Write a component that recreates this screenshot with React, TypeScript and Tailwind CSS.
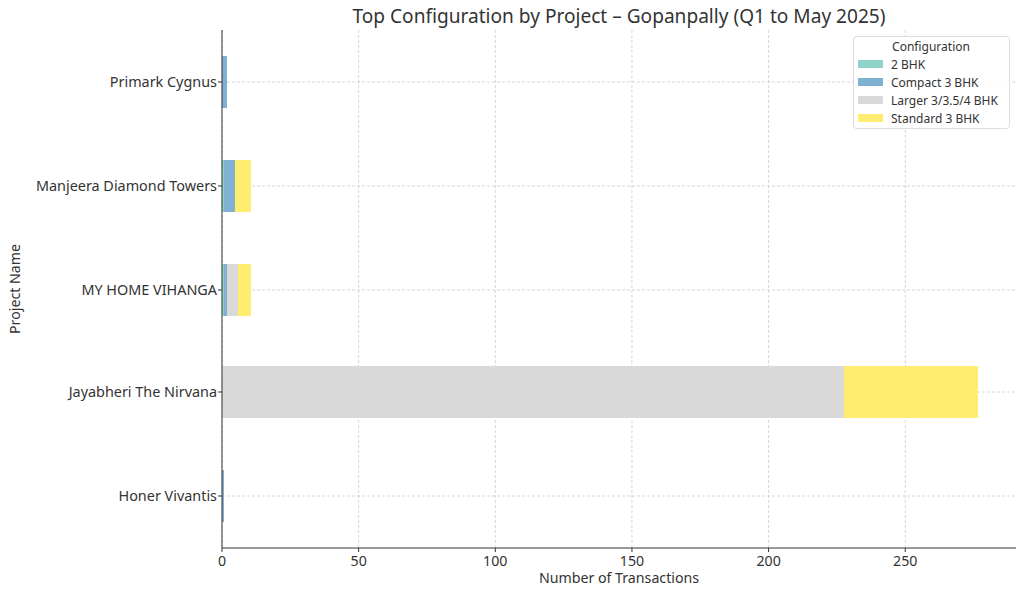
export default function App() {
  const x0 = 222, k = 2.733;
  const X = (v: number) => x0 + v * k;
  const ticks = [0, 50, 100, 150, 200, 250];
  const rows = [
    { name: "Primark Cygnus", y: 82, segs: [["#80b1d3", 222, 227]] },
    { name: "Manjeera Diamond Towers", y: 186, segs: [["#8dd3c7", 222, 224], ["#80b1d3", 224, 235], ["#ffed6f", 235, 251]] },
    { name: "MY HOME VIHANGA", y: 290, segs: [["#8dd3c7", 222, 224], ["#80b1d3", 224, 227], ["#d9d9d9", 227, 238], ["#ffed6f", 238, 251]] },
    { name: "Jayabheri The Nirvana", y: 392, segs: [["#d9d9d9", 222, 844], ["#ffed6f", 844, 978]] },
    { name: "Honer Vivantis", y: 496, segs: [["#80b1d3", 222, 224]] },
  ] as { name: string; y: number; segs: [string, number, number][] }[];
  const legend: [string, string][] = [["#8dd3c7", "2 BHK"], ["#80b1d3", "Compact 3 BHK"], ["#d9d9d9", "Larger 3/3.5/4 BHK"], ["#ffed6f", "Standard 3 BHK"]];
  return (
    <div className="w-[1024px] h-[594px] bg-white font-['DejaVu_Sans',sans-serif]">
      <svg width="1024" height="594">
        <text x="619" y="23" textAnchor="middle" fontSize="19.1" fill="#333">Top Configuration by Project – Gopanpally (Q1 to May 2025)</text>
        {ticks.map((t) => (
          <g key={t}>
            <line x1={X(t)} x2={X(t)} y1="30" y2="548" stroke="#ccc" strokeDasharray="3 2" strokeWidth="0.8" />
            <line x1={X(t)} x2={X(t)} y1="548" y2="552" stroke="#333" />
            <text x={X(t)} y="566" textAnchor="middle" fontSize="14.2" fill="#333">{t}</text>
          </g>
        ))}
        {rows.map((r) => (
          <g key={r.name}>
            <line x1="222" x2="1016" y1={r.y} y2={r.y} stroke="#ccc" strokeDasharray="3 2" strokeWidth="0.8" />
            {r.segs.map(([c, a, b], i) => (
              <rect key={i} x={a} y={r.y - 26} width={b - a} height="52" fill={c} />
            ))}
            <line x1="218" x2="222" y1={r.y} y2={r.y} stroke="#333" />
            <text x="217" y={r.y + 5} textAnchor="end" fontSize="14.4" fill="#333">{r.name}</text>
          </g>
        ))}
        <line x1="222" x2="222" y1="30" y2="548" stroke="#333" strokeWidth="1" />
        <line x1="222" x2="1016" y1="548" y2="548" stroke="#333" strokeWidth="1" />
        <text x="619" y="583" textAnchor="middle" fontSize="14.2" fill="#333">Number of Transactions</text>
        <text transform="translate(20 289) rotate(-90)" textAnchor="middle" fontSize="14.2" fill="#333">Project Name</text>
        <rect x="853.5" y="36.5" width="156" height="92" rx="3" fill="white" fillOpacity="0.85" stroke="#ddd" />
        <text x="931" y="51" textAnchor="middle" fontSize="12" fill="#333">Configuration</text>
        {legend.map(([c, l], i) => (
          <g key={l}>
            <rect x="858" y={60 + i * 18} width="25" height="8" fill={c} />
            <text x="891" y={69 + i * 18} fontSize="12" fill="#333">{l}</text>
          </g>
        ))}
      </svg>
    </div>
  );
}
